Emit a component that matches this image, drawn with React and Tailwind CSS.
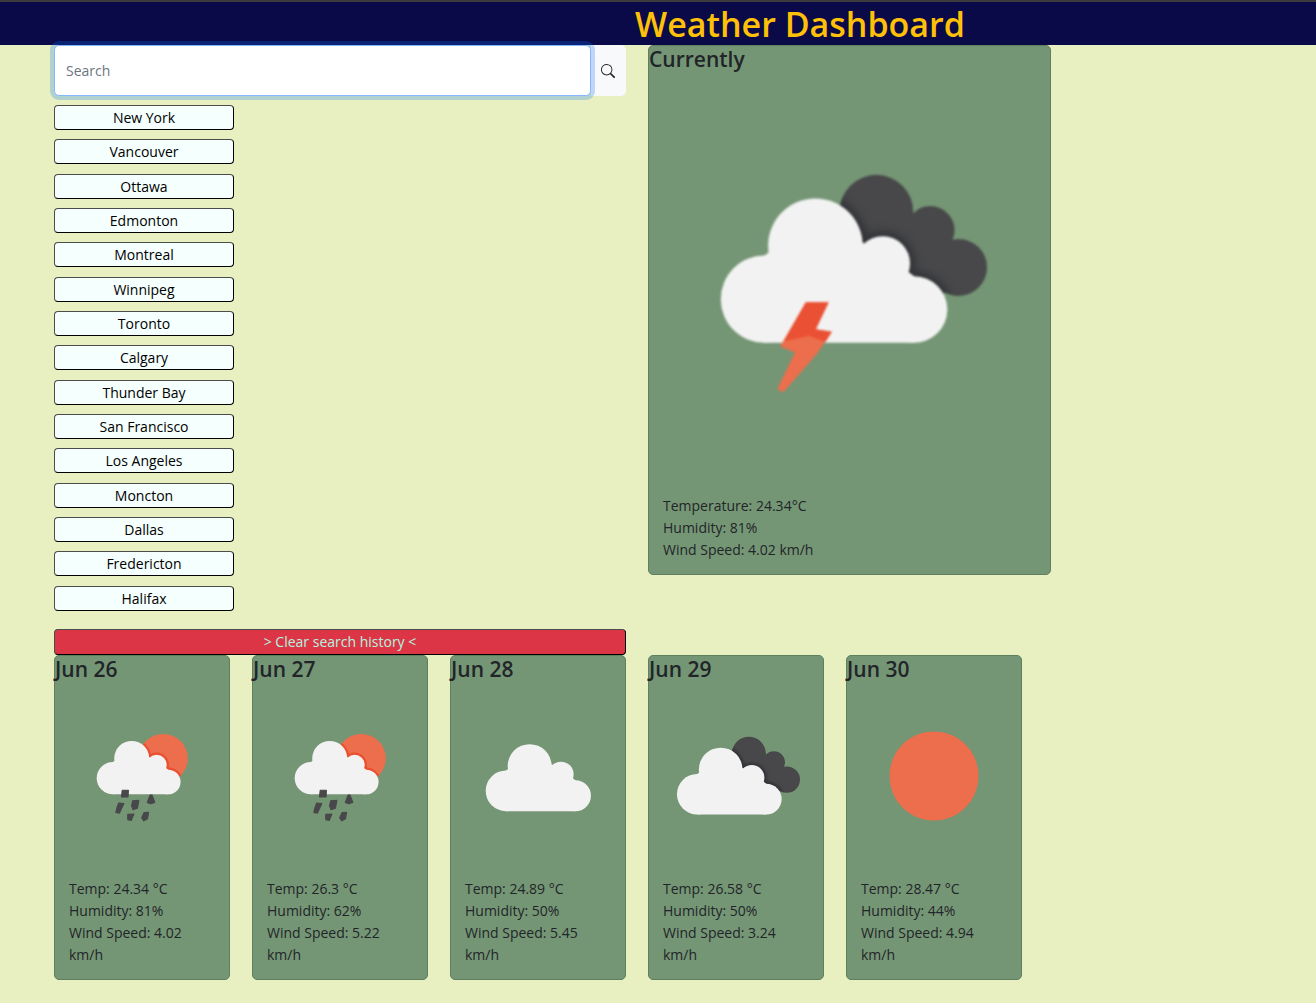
import React from "react";

const cities = [
  "New York", "Vancouver", "Ottawa", "Edmonton", "Montreal", "Winnipeg", "Toronto", "Calgary",
  "Thunder Bay", "San Francisco", "Los Angeles", "Moncton", "Dallas", "Fredericton", "Halifax",
];

const forecast = [
  { date: "Jun 26", icon: "rain", temp: "24.34", humidity: 81, wind: "4.02" },
  { date: "Jun 27", icon: "rain", temp: "26.3", humidity: 62, wind: "5.22" },
  { date: "Jun 28", icon: "cloud", temp: "24.89", humidity: 50, wind: "5.45" },
  { date: "Jun 29", icon: "broken", temp: "26.58", humidity: 50, wind: "3.24" },
  { date: "Jun 30", icon: "sun", temp: "28.47", humidity: 44, wind: "4.94" },
];

function CloudShape(props) {
  return (
    <g {...props}>
      <circle cx="28.8" cy="54.9" r="10.9" />
      <circle cx="41.5" cy="41.6" r="11.8" />
      <circle cx="58.3" cy="46" r="6.8" />
      <circle cx="66.1" cy="57.5" r="8.3" />
      <path d="M28.8 65.8L28.8 44L40 36L52 40L62 46L66.1 49.2L66.1 65.8Z" />
    </g>
  );
}

function DarkCloud({ id }) {
  return (
    <>
      <clipPath id={id}>
        <circle cx="56.7" cy="33.1" r="9.2" />
        <circle cx="70.2" cy="37.7" r="6" />
        <circle cx="77.2" cy="47" r="7.1" />
        <path d="M50 40L60 30L66 33.6L76 40.4L80 52L70 54Z" />
      </clipPath>
      <g clipPath={`url(#${id})`}>
        <rect width="100" height="100" fill="#48484a" />
        <CloudShape fill="#303236" stroke="#303236" strokeWidth="2.4" className="blur-[1px]" />
      </g>
    </>
  );
}

function WeatherIcon({ kind, label, className }) {
  return (
    <svg viewBox="0 0 100 100" role="img" aria-label={label} className={`block w-full ${className}`}>
      {kind === "storm" && (
        <g>
          <DarkCloud id="storm-back" />
          <CloudShape fill="#f2f2f2" />
          <path d="M39.1 55.7L44.8 55.7L41.6 62.4L45.6 63L42 68.4L33.5 78.1L32 77.3L36.4 68.2L32.7 66.7Z" fill="#ec6e4c" />
          <path d="M39.1 55.7L44.8 55.7L41.6 62.4L45.6 63L44 65.6L40 64L33.6 65.4Z" fill="#ea5033" />
        </g>
      )}
      {kind === "broken" && (
        <g transform="translate(-3 2) scale(1.065)">
          <DarkCloud id="broken-back" />
          <CloudShape fill="#f2f2f2" />
        </g>
      )}
      {kind === "cloud" && <CloudShape fill="#f2f2f2" transform="translate(0.8 -0.2) scale(1.07)" />}
      {kind === "rain" && (
        <g>
          <clipPath id="rain-sun">
            <circle cx="62.2" cy="39.9" r="14.1" />
          </clipPath>
          <g clipPath="url(#rain-sun)">
            <rect width="100" height="100" fill="#ec6e4c" />
            <CloudShape fill="#ea4f30" stroke="#ea4f30" strokeWidth="3" transform="translate(8.7 4.4) scale(0.853)" />
          </g>
          <CloudShape fill="#f2f2f2" transform="translate(8.7 4.4) scale(0.853)" />
          <g fill="#48484a" stroke="#48484a" strokeWidth="0.6" strokeLinejoin="round">
            <path d="M38.6 58.2L42.2 58.2L42 62L38.2 62Z" />
            <path d="M36.6 65.5L39.6 65.8L37 71.4L34.9 71L35.8 67.5Z" />
            <path d="M44.6 64.2L48.2 64L47.4 68.6L44.8 69.4L44 67.2Z" />
            <path d="M54.6 61L55.8 61L57.4 65.2L55 66L53 65.2Z" />
            <path d="M41.8 72L45.4 71.8L43.8 75.6L41.8 75.2Z" />
            <path d="M51.2 71L53.8 70.8L53.2 74.6L51 75.8L49.8 74Z" />
          </g>
        </g>
      )}
      {kind === "sun" && <circle cx="50" cy="50" r="25.6" fill="#ec6e4c" />}
    </svg>
  );
}

function WeatherCard({ title, children, kind, label, iconClass, className }) {
  return (
    <article className={`rounded-[5px] border border-[#5f805f] bg-[#759675] ${className}`}>
      <h2 className="mb-[7px] text-[21px] leading-[26px] font-semibold">{title}</h2>
      <WeatherIcon kind={kind} label={label} className={iconClass} />
      <div className="px-[14px] pt-[15px] pb-[13px] leading-[22px]">{children}</div>
    </article>
  );
}

export default function App() {
  return (
    <div className="min-h-screen bg-[#e8f0c2] pb-6 font-['Open_Sans','Noto_Sans',sans-serif] text-[14px] text-[#212529]">
      <header className="border-t-2 border-[#3c3c3c] bg-[#0a0a48] pl-[284px] text-center">
        <h1 className="pt-px text-[34px] leading-[42px] font-semibold text-[#ffc107]">Weather Dashboard</h1>
      </header>

      <main className="grid grid-cols-6 gap-x-[22px] pr-[96px] pl-[54px]">
        <section className="col-span-3">
          <form className="flex h-[51px]" onSubmit={(e) => e.preventDefault()}>
            <input
              type="search"
              aria-label="Search"
              placeholder="Search"
              className="relative z-10 min-w-0 flex-1 rounded-[5px] border border-[#86b7fe] bg-white px-[11px] shadow-[0_0_0_4px_rgba(13,110,253,0.25)] outline-none placeholder:text-[#6c757d]"
            />
            <button type="submit" aria-label="Submit search" className="w-[35px] rounded-r-[5px] bg-[#f8f9fa] pl-[10px]">
              <svg viewBox="0 0 16 16" fill="currentColor" className="size-[14px]">
                <path d="M11.742 10.344a6.5 6.5 0 1 0-1.397 1.398h-.001c.03.04.062.078.098.115l3.85 3.85a1 1 0 0 0 1.415-1.414l-3.85-3.85a1.007 1.007 0 0 0-.115-.1zM12 6.5a5.5 5.5 0 1 1-11 0 5.5 5.5 0 0 1 11 0z" />
              </svg>
            </button>
          </form>

          <div className="mt-[9px] flex min-h-[506px] w-[180px] flex-col justify-between">
            {cities.map((city) => (
              <button
                key={city}
                type="button"
                className="h-[25px] rounded-[4px] border border-t-[#4c4c4c] border-r-black border-b-black border-l-[#4c4c4c] bg-[#f5fffe] leading-[23px] text-black"
              >
                {city}
              </button>
            ))}
          </div>
          <button
            type="button"
            className="mt-[18px] block h-[26px] w-full rounded-[4px] border border-t-[#4c4c4c] border-r-black border-b-black border-l-[#4c4c4c] bg-[#dc3545] leading-[24px] text-[#aff5e0]"
          >
            &gt; Clear search history &lt;
          </button>
        </section>

        <section className="col-span-3">
          <WeatherCard title="Currently" kind="storm" label="Thunderstorm" iconClass="blur-[1px]" className="w-[403px] max-w-full">
            <p>Temperature: 24.34°C</p>
            <p>Humidity: 81%</p>
            <p>Wind Speed: 4.02 km/h</p>
          </WeatherCard>
        </section>

        {forecast.map((day) => (
          <WeatherCard key={day.date} title={day.date} kind={day.icon} label={day.icon} iconClass="blur-[0.5px]" className="">
            <p>Temp: {day.temp} °C</p>
            <p>Humidity: {day.humidity}%</p>
            <p>Wind Speed: {day.wind} km/h</p>
          </WeatherCard>
        ))}
      </main>
    </div>
  );
}
